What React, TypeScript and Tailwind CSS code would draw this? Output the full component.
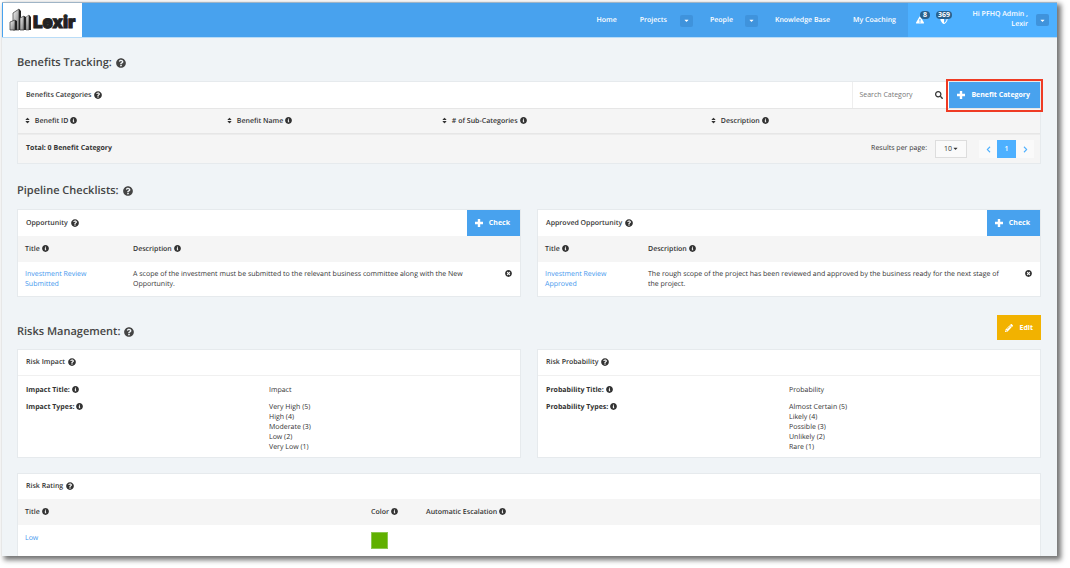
import React from 'react';
import {
  FaCaretDown,
  FaChevronLeft,
  FaChevronRight,
  FaExclamationTriangle,
  FaInfoCircle,
  FaPencilAlt,
  FaQuestionCircle,
  FaSearch,
  FaShieldAlt,
  FaSort,
  FaTimesCircle,
} from 'react-icons/fa';

/* ------------------------------------------------------------------ */

interface Checklist {
  title: string;
  item: string;
  description: string;
  titleWidth: string;
}

interface Scale {
  title: string;
  prefix: string;
  name: string;
  types: string[];
}

const CATEGORY_COLUMNS = [
  { label: 'Benefit ID', width: 'w-[202px]' },
  { label: 'Benefit Name', width: 'w-[215px]' },
  { label: '# of Sub-Categories', width: 'w-[269px]' },
  { label: 'Description', width: '' },
];

const CHECKLISTS: Checklist[] = [
  {
    title: 'Opportunity',
    item: 'Investment Review Submitted',
    description:
      'A scope of the investment must be submitted to the relevant business committee along with the New Opportunity.',
    titleWidth: 'w-[115px]',
  },
  {
    title: 'Approved Opportunity',
    item: 'Investment Review Approved',
    description:
      'The rough scope of the project has been reviewed and approved by the business ready for the next stage of the project.',
    titleWidth: 'w-[110px]',
  },
];

const SCALES: Scale[] = [
  {
    title: 'Risk Impact',
    prefix: 'Impact',
    name: 'Impact',
    types: ['Very High (5)', 'High (4)', 'Moderate (3)', 'Low (2)', 'Very Low (1)'],
  },
  {
    title: 'Risk Probability',
    prefix: 'Probability',
    name: 'Probability',
    types: ['Almost Certain (5)', 'Likely (4)', 'Possible (3)', 'Unlikely (2)', 'Rare (1)'],
  },
];

/* ------------------------------------------------------------------ */

const Info = () => <FaInfoCircle size={7} className="ml-0.5 inline-block shrink-0 align-[-1px]" />;

const Plus = () => (
  <svg viewBox="0 0 8 8" className="h-2 w-2 fill-current">
    <path d="M2.8 0h2.4v2.8H8v2.4H5.2V8H2.8V5.2H0V2.8h2.8z" />
  </svg>
);

const Panel: React.FC<{ children: React.ReactNode }> = ({ children }) => (
  <div className="border border-[#e6eaed] bg-white">{children}</div>
);

const PanelHeader: React.FC<{ title: string; children?: React.ReactNode }> = ({ title, children }) => (
  <div className="flex min-h-[25px] items-stretch justify-between pl-2">
    <h3 className="flex items-center gap-[3px] pt-px text-[7px] font-semibold">
      {title} <FaQuestionCircle size={8} className="mb-0.5" />
    </h3>
    {children}
  </div>
);

const SectionTitle: React.FC<{ children: React.ReactNode }> = ({ children }) => (
  <h2 className="flex items-center gap-1 text-[11px] leading-4 font-semibold text-[#444]">
    {children} <FaQuestionCircle size={10} className="mb-px" />
  </h2>
);

const AddButton: React.FC<{ label: string }> = ({ label }) => (
  <button className="flex min-h-[26px] items-center gap-1.5 bg-[#48a2ee] pr-2.5 pl-2 text-[7px] font-bold text-white">
    <Plus /> {label}
  </button>
);

const MenuToggle: React.FC<{ label: string }> = ({ label }) => (
  <button aria-label={label} className="grid h-3 w-[13px] place-items-center rounded-xs bg-[#3f93dc]">
    <FaCaretDown size={7} />
  </button>
);

const Logo = () => (
  <a href="#" aria-label="Lexir home" className="flex w-[79px] items-center bg-white pl-1.5 text-[#222]">
    <svg viewBox="0 0 24 24" className="h-6 w-6 shrink-0">
      <defs>
        <linearGradient id="steel" x1="0" y1="0" x2="1" y2="1">
          <stop offset="0" stopColor="#f5f5f5" />
          <stop offset="1" stopColor="#777" />
        </linearGradient>
      </defs>
      <path d="M4 5 10 1v21H4z" fill="url(#steel)" stroke="#333" strokeWidth=".7" />
      <path d="M10 1l2 2v19h-2z" fill="#222" />
      <path d="M1 14l5-2v10H1z" fill="url(#steel)" stroke="#333" strokeWidth=".7" />
      <path d="M6 12l2 1v9H6z" fill="#222" />
      <path d="M11 10l4-2v14h-4z" fill="url(#steel)" stroke="#333" strokeWidth=".7" />
      <path d="M15 8l2 1v13h-2z" fill="#222" />
      <path d="M17 9l3-2v15h-3z" fill="url(#steel)" stroke="#333" strokeWidth=".5" />
      <path d="M20 7l2 2v13h-2z" fill="#222" />
    </svg>
    <span className="pt-1.5 font-['Inter'] text-[17px] leading-none font-black [-webkit-text-stroke:1px_#222]">Lexir</span>
  </a>
);

const TopBar = () => (
  <header className="flex h-9 border-t border-b border-t-[#9fb4c6] border-b-[#b9dcf7] bg-[#48a2ee] pl-px text-[7px] font-semibold text-white">
    <Logo />
    <nav className="ml-auto flex items-center gap-[23px] pt-px pr-3">
      <a href="#">Home</a>
      <div className="flex items-center gap-[13px]">
        <a href="#">Projects</a>
        <MenuToggle label="Projects menu" />
      </div>
      <div className="-mx-1.5 flex items-center gap-3">
        <a href="#">People</a>
        <MenuToggle label="People menu" />
      </div>
      <a href="#">Knowledge Base</a>
      <a href="#">My Coaching</a>
    </nav>
    <div className="flex w-[149px] items-center bg-[#4db0ff] pr-2 pl-2">
      <button aria-label="Alerts" className="relative mr-4">
        <FaExclamationTriangle size={8} />
        <span className="absolute -top-[5px] left-1 rounded-full bg-[#28618d] px-[3px] text-[7px] leading-2 font-bold">8</span>
      </button>
      <button aria-label="Notifications" className="relative">
        <FaShieldAlt size={8} />
        <span className="absolute -top-[5px] -left-1 rounded-full bg-[#28618d] px-0.5 text-[7px] leading-2 font-bold">369</span>
      </button>
      <p className="ml-auto w-16 text-right leading-[10px]">Hi PFHQ Admin , <br />Lexir</p>
      <div className="ml-2 flex">
        <MenuToggle label="Account menu" />
      </div>
    </div>
  </header>
);

const BenefitCategories = () => (
  <Panel>
    <PanelHeader title="Benefits Categories">
      <div className="flex">
        <label className="flex items-center border-l border-[#eee] px-1.5">
          <input
            type="text"
            aria-label="Search Category"
            placeholder="Search Category"
            className="w-[76px] text-[7px] outline-none placeholder:text-[#777]"
          />
          <FaSearch size={8} />
        </label>
        <div className="relative flex">
          <AddButton label="Benefit Category" />
          <span className="pointer-events-none absolute -inset-x-[3px] -top-[3px] -bottom-1 border-2 border-[#ef3b24]" />
        </div>
      </div>
    </PanelHeader>
    <table className="w-full table-fixed text-left">
      <thead>
        <tr className="h-[25px] border-t border-b border-[#e6e6e6] bg-[#f5f5f5]">
          {CATEGORY_COLUMNS.map((c) => (
            <th key={c.label} className={`pt-0.5 pl-1.5 font-semibold ${c.width}`}>
              <FaSort size={7} className="mr-0.5 inline-block align-[-1px]" /> {c.label}
              <Info />
            </th>
          ))}
        </tr>
      </thead>
    </table>
    <div className="flex h-[29px] items-center border-t border-[#ececec] bg-[#f5f5f5] pr-1.5 pl-2">
      <strong className="font-bold">Total: 0 Benefit Category</strong>
      <label className="ml-auto flex items-center gap-2">
        Results per page:
        <span className="relative">
          <select className="h-[18px] w-8 appearance-none border border-[#ddd] bg-[#fafafa] pl-2 text-[7px] outline-none">
            <option>10</option>
          </select>
          <FaCaretDown size={7} className="pointer-events-none absolute top-[5px] right-2" />
        </span>
      </label>
      <div className="ml-3 flex h-[18px] text-[#4db0ff]">
        <button aria-label="Previous page" className="grid w-[18px] place-items-center bg-[#fafafa]">
          <FaChevronLeft size={7} />
        </button>
        <button className="w-[19px] bg-[#4db0ff] font-semibold text-white">1</button>
        <button aria-label="Next page" className="grid w-[18px] place-items-center bg-[#fafafa]">
          <FaChevronRight size={7} />
        </button>
      </div>
    </div>
  </Panel>
);

const ChecklistPanel: React.FC<{ list: Checklist }> = ({ list }) => (
  <Panel>
    <PanelHeader title={list.title}>
      <AddButton label="Check" />
    </PanelHeader>
    <table className="w-full table-fixed text-left">
      <thead>
        <tr className="h-[26px] bg-[#f5f5f5]">
          <th className={`pt-px pl-[7px] font-semibold ${list.titleWidth}`}>Title<Info /></th>
          <th className="pt-px font-semibold">Description<Info /></th>
          <th className="w-6" />
        </tr>
      </thead>
      <tbody>
        <tr className="align-top">
          <td className="pt-2 pr-6 pb-1.5 pl-[7px]">
            <a href="#" className="text-[#3f97ee]">{list.item}</a>
          </td>
          <td className="pt-2 pr-2 pb-1.5">{list.description}</td>
          <td className="pt-2 pr-2">
            <button aria-label={`Remove ${list.item}`} className="ml-auto block">
              <FaTimesCircle size={7} />
            </button>
          </td>
        </tr>
      </tbody>
    </table>
  </Panel>
);

const ScalePanel: React.FC<{ scale: Scale }> = ({ scale }) => (
  <Panel>
    <PanelHeader title={scale.title} />
    <dl className="grid grid-cols-2 gap-y-[7px] border-t border-[#f0f0f0] pt-2.5 pr-2 pb-1 pl-2">
      <dt className="font-bold">{scale.prefix} Title:<Info /></dt>
      <dd>{scale.name}</dd>
      <dt className="font-bold">{scale.prefix} Types:<Info /></dt>
      <dd>
        {scale.types.map((t) => (
          <p key={t}>{t}</p>
        ))}
      </dd>
    </dl>
  </Panel>
);

const RiskRating = () => (
  <Panel>
    <PanelHeader title="Risk Rating" />
    <table className="w-full table-fixed text-left">
      <thead>
        <tr className="h-[26px] bg-[#f5f5f5]">
          <th className="w-[353px] pt-0.5 pl-[7px] font-semibold">Title<Info /></th>
          <th className="w-[55px] pt-0.5 font-semibold">Color<Info /></th>
          <th className="pt-0.5 font-semibold">Automatic Escalation<Info /></th>
        </tr>
      </thead>
      <tbody>
        <tr className="h-10 align-top">
          <td className="pt-[9px] pl-[7px]"><a href="#" className="text-[#3f97ee]">Low</a></td>
          <td className="pt-[7px]"><div className="h-[17px] w-[17px] border border-[#8cc850] bg-[#60b000]" /></td>
          <td />
        </tr>
      </tbody>
    </table>
  </Panel>
);

/* ------------------------------------------------------------------ */

const App: React.FC = () => (
  <div className="h-screen overflow-hidden bg-white pt-0.5 pr-[13px] pb-3 pl-0.5 font-['Open_Sans',sans-serif] text-[7px] leading-[10px] text-[#333] [text-rendering:geometricPrecision]">
    <div className="h-full overflow-hidden bg-[#f0f4f7] shadow-[3px_3px_5px_1px_rgba(0,0,0,0.55)]">
      <TopBar />
      <main className="pr-4 pl-[15px]">
        <div className="pt-[17px] pb-[10px]">
          <SectionTitle>Benefits Tracking:</SectionTitle>
        </div>
        <BenefitCategories />

        <div className="pt-[19px] pb-[10px]">
          <SectionTitle>Pipeline Checklists:</SectionTitle>
        </div>
        <div className="grid grid-cols-2 gap-4">
          {CHECKLISTS.map((list) => (
            <ChecklistPanel key={list.title} list={list} />
          ))}
        </div>

        <div className="flex items-end justify-between pt-[18px] pb-[9px]">
          <SectionTitle>Risks Management:</SectionTitle>
          <button className="flex h-[25px] items-center gap-1.5 bg-[#f2b200] px-2 text-[7px] font-bold text-white">
            <FaPencilAlt size={8} /> Edit
          </button>
        </div>
        <div className="grid grid-cols-2 gap-4 pb-[15px]">
          {SCALES.map((scale) => (
            <ScalePanel key={scale.title} scale={scale} />
          ))}
        </div>
        <RiskRating />
      </main>
    </div>
  </div>
);

export default App;
